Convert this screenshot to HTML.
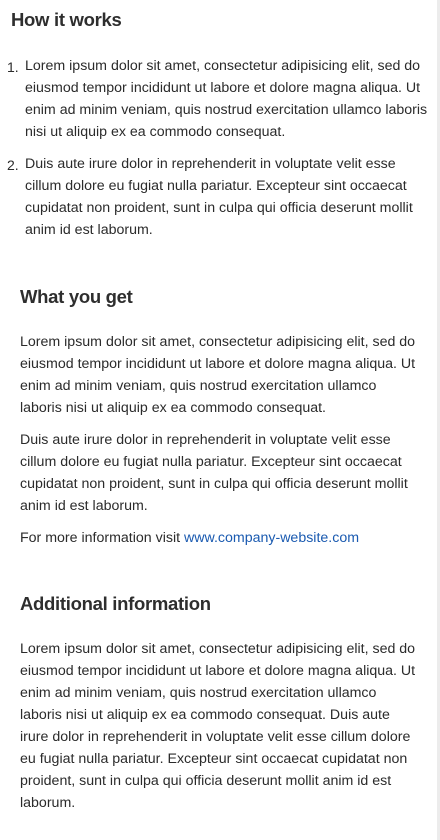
<!DOCTYPE html>
<html><head><meta charset="utf-8"><style>
html,body{margin:0;padding:0;background:#fff;}
body{width:440px;height:840px;position:relative;overflow:hidden;font-family:"Liberation Sans",Arial,sans-serif;color:#2b2b2b;}
.border{position:absolute;left:437px;top:0;width:3px;height:840px;background:#ececec;}
h2{position:absolute;margin:0;font-size:18.5px;font-weight:bold;color:#2e2e2e;letter-spacing:-0.3px;line-height:24px;}
.p{position:absolute;font-size:14.2px;line-height:22px;white-space:nowrap;}
.n{position:absolute;font-size:14px;line-height:22px;}
a{color:#1a5ab0;text-decoration:none;}
</style></head><body>
<div class="border"></div>
<h2 style="left:11px;top:8px">How it works</h2>
<div class="n" style="left:7px;top:56px">1.</div>
<div class="p" style="left:25px;top:55px">Lorem ipsum dolor sit amet, consectetur adipisicing elit, sed do<br>eiusmod tempor incididunt ut labore et dolore magna aliqua. Ut<br>enim ad minim veniam, quis nostrud exercitation ullamco laboris<br>nisi ut aliquip ex ea commodo consequat.</div>
<div class="n" style="left:7px;top:154px">2.</div>
<div class="p" style="left:25px;top:153px">Duis aute irure dolor in reprehenderit in voluptate velit esse<br>cillum dolore eu fugiat nulla pariatur. Excepteur sint occaecat<br>cupidatat non proident, sunt in culpa qui officia deserunt mollit<br>anim id est laborum.</div>
<h2 style="left:20px;top:285px">What you get</h2>
<div class="p" style="left:20px;top:331px">Lorem ipsum dolor sit amet, consectetur adipisicing elit, sed do<br>eiusmod tempor incididunt ut labore et dolore magna aliqua. Ut<br>enim ad minim veniam, quis nostrud exercitation ullamco<br>laboris nisi ut aliquip ex ea commodo consequat.</div>
<div class="p" style="left:20px;top:429px">Duis aute irure dolor in reprehenderit in voluptate velit esse<br>cillum dolore eu fugiat nulla pariatur. Excepteur sint occaecat<br>cupidatat non proident, sunt in culpa qui officia deserunt mollit<br>anim id est laborum.</div>
<div class="p" style="left:20px;top:527px">For more information visit <a>www.company-website.com</a></div>
<h2 style="left:20px;top:592px">Additional information</h2>
<div class="p" style="left:20px;top:638px">Lorem ipsum dolor sit amet, consectetur adipisicing elit, sed do<br>eiusmod tempor incididunt ut labore et dolore magna aliqua. Ut<br>enim ad minim veniam, quis nostrud exercitation ullamco<br>laboris nisi ut aliquip ex ea commodo consequat. Duis aute<br>irure dolor in reprehenderit in voluptate velit esse cillum dolore<br>eu fugiat nulla pariatur. Excepteur sint occaecat cupidatat non<br>proident, sunt in culpa qui officia deserunt mollit anim id est<br>laborum.</div>
</body></html>
